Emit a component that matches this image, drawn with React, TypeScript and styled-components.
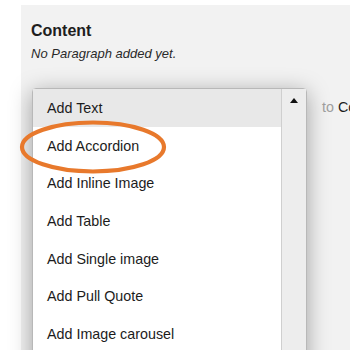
import React from "react";
import styled, { createGlobalStyle } from "styled-components";

const Global = createGlobalStyle`
  html, body { margin: 0; padding: 0; background: #ffffff; overflow: hidden; }
  body { font-family: "Liberation Sans", Arial, sans-serif; }
`;

const Page = styled.div`
  width: 350px;
  height: 350px;
  overflow: hidden;
  padding: 5px 0 0 21px;
  box-sizing: border-box;
`;

const Panel = styled.section`
  background: #f2f2f2;
  height: 400px;
  padding: 16px 0 0 10px;
  box-sizing: border-box;
`;

const Title = styled.h2`
  margin: 0;
  font-size: 16px;
  line-height: 20px;
  font-weight: bold;
  color: #1e1e1e;
`;

const Note = styled.p`
  margin: 4px 0 0;
  font-size: 13px;
  line-height: 17px;
  font-style: italic;
  color: #2a2a2a;
`;

const Row = styled.div`
  display: flex;
  align-items: flex-start;
  margin-top: 26px;
  margin-left: 1px;
`;

const ListBox = styled.div`
  position: relative;
  display: flex;
  width: 275px;
  height: 300px;
  flex: none;
  background: #ffffff;
  border: 1px solid #b8b8b8;
  border-radius: 4px 4px 0 0;
  box-shadow: 0 4px 22px rgba(0, 0, 0, 0.34);
  box-sizing: border-box;
  z-index: 1;
`;

const Options = styled.ul`
  list-style: none;
  margin: 0;
  padding: 0;
  flex: 1;
`;

const Option = styled.li<{ $active?: boolean }>`
  height: 37.7px;
  display: flex;
  align-items: center;
  padding-left: 14px;
  font-size: 14.3px;
  color: #1c1c1c;
  background: ${(p) => (p.$active ? "#e8e8e8" : "#ffffff")};
`;

const Scrollbar = styled.div`
  width: 25px;
  flex: none;
  background: #ededed;
  border-left: 1px solid #cfcfcf;
  display: flex;
  justify-content: center;
  padding-top: 9px;
  box-sizing: border-box;
`;

const Arrow = styled.div`
  width: 0;
  height: 0;
  border-left: 4px solid transparent;
  border-right: 4px solid transparent;
  border-bottom: 5px solid #111;
`;

const Circle = styled.svg`
  position: absolute;
  left: -14px;
  top: 31px;
  width: 148px;
  height: 54px;
  overflow: visible;
  pointer-events: none;
`;

const Target = styled.span`
  margin-left: 15px;
  margin-top: 11px;
  font-size: 14.3px;
  white-space: nowrap;
  color: #a0a0a0;
`;

const Strong = styled.span`
  color: #1e1e1e;
`;

const items = [
  "Add Text",
  "Add Accordion",
  "Add Inline Image",
  "Add Table",
  "Add Single image",
  "Add Pull Quote",
  "Add Image carousel",
];

export default function App() {
  return (
    <>
      <Global />
      <Page>
        <Panel>
          <Title>Content</Title>
          <Note>No Paragraph added yet.</Note>
          <Row>
            <ListBox>
              <Options>
                {items.map((t, i) => (
                  <Option key={t} $active={i === 0}>
                    {t}
                  </Option>
                ))}
              </Options>
              <Scrollbar>
                <Arrow />
              </Scrollbar>
              <Circle viewBox="0 0 148 54">
                <ellipse
                  cx="74"
                  cy="27"
                  rx="71"
                  ry="24.5"
                  fill="none"
                  stroke="#e8792c"
                  strokeWidth="4.2"
                />
              </Circle>
            </ListBox>
            <Target>
              to <Strong>Content</Strong>
            </Target>
          </Row>
        </Panel>
      </Page>
    </>
  );
}
